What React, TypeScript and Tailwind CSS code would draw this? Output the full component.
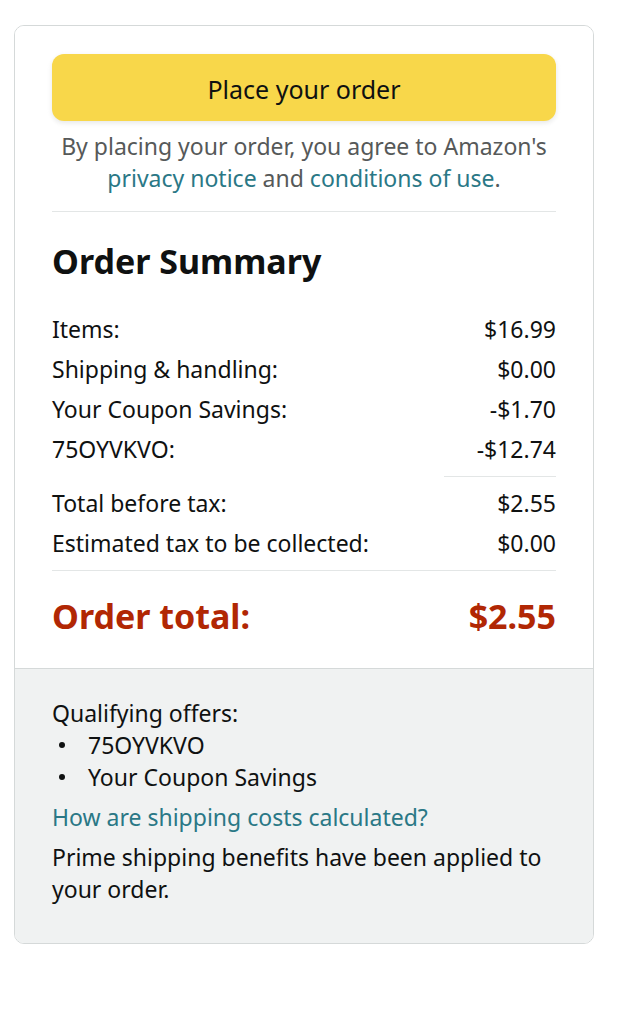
import React from "react";

const font = { fontFamily: '"Noto Sans", Arial, sans-serif' };

function Row({ label, value }: { label: string; value: string }) {
  return (
    <div className="flex justify-between text-[23px] leading-[32px] text-[#0f1111]">
      <span>{label}</span>
      <span>{value}</span>
    </div>
  );
}

function Bullet({ children }: { children: React.ReactNode }) {
  return (
    <li className="flex items-center">
      <span className="w-[36px] flex pl-[7px]">
        <span className="block w-[6px] h-[6px] rounded-full bg-[#0f1111]" />
      </span>
      <span>{children}</span>
    </li>
  );
}

export default function App() {
  return (
    <div className="bg-white min-h-[1032px] pt-[25px] pl-[14px]" style={font}>
      <div className="w-[580px] border border-[#d5d9d9] rounded-[10px] overflow-hidden">
        <div className="px-[37px] pt-[28px] pb-[32px] bg-white">
          <button className="w-full h-[67px] pt-[5px] rounded-[12px] bg-[#f8d74a] text-[25px] text-[#0f1111] shadow-[0_2px_5px_rgba(213,217,217,0.6)]">
            Place your order
          </button>
          <p className="mt-[9px] text-center text-[23px] leading-[32px] text-[#565959]">
            By placing your order, you agree to Amazon's
            <br />
            <a className="text-[#2a7886]">privacy notice</a> and{" "}
            <a className="text-[#2a7886]">conditions of use</a>.
          </p>
          <div className="mt-[17px] h-px bg-[#e3e6e6]" />
          <h2 className="mt-[29px] text-[34px] leading-[40px] font-bold text-[#0f1111]">
            Order Summary
          </h2>
          <div className="mt-[32px] flex flex-col gap-[8px]">
            <Row label="Items:" value="$16.99" />
            <Row label="Shipping & handling:" value="$0.00" />
            <Row label="Your Coupon Savings:" value="-$1.70" />
            <Row label="75OYVKVO:" value="-$12.74" />
          </div>
          <div className="mt-[11px] flex justify-end">
            <div className="w-[112px] h-px bg-[#e3e6e6]" />
          </div>
          <div className="mt-[10px] flex flex-col gap-[8px]">
            <Row label="Total before tax:" value="$2.55" />
            <Row label="Estimated tax to be collected:" value="$0.00" />
          </div>
          <div className="mt-[11px] h-px bg-[#e3e6e6]" />
          <div className="mt-[25px] flex justify-between text-[34px] leading-[40px] font-bold text-[#b12704]">
            <span>Order total:</span>
            <span>$2.55</span>
          </div>
        </div>
        <div className="border-t border-[#d5d9d9] bg-[#f0f2f2] px-[37px] pt-[28px] pb-[38px] text-[23px] leading-[32px] text-[#0f1111]">
          <div>Qualifying offers:</div>
          <ul>
            <Bullet>75OYVKVO</Bullet>
            <Bullet>Your Coupon Savings</Bullet>
          </ul>
          <a className="block mt-[8px] text-[#2a7886]">How are shipping costs calculated?</a>
          <p className="mt-[8px]">
            Prime shipping benefits have been applied to your order.
          </p>
        </div>
      </div>
    </div>
  );
}
